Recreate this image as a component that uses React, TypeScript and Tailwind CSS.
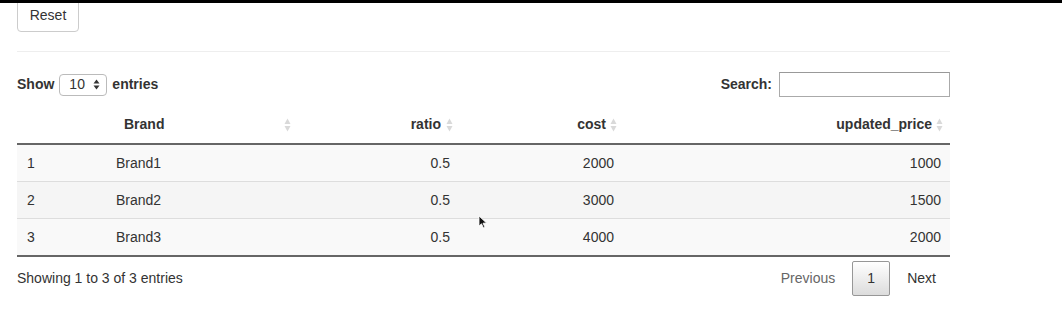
import React from "react";

type Row = { id: number; brand: string; ratio: string; cost: number; updated: number };

const rows: Row[] = [
  { id: 1, brand: "Brand1", ratio: "0.5", cost: 2000, updated: 1000 },
  { id: 2, brand: "Brand2", ratio: "0.5", cost: 3000, updated: 1500 },
  { id: 3, brand: "Brand3", ratio: "0.5", cost: 4000, updated: 2000 },
];

// DataTables-style double arrow sort marker
function SortIcon() {
  return (
    <svg width="7" height="14" viewBox="0 0 7 14" className="shrink-0">
      <path d="M3.5 0.5 L6.5 6 L0.5 6 Z" fill="#d9d9d9" />
      <path d="M3.5 13.5 L6.5 8 L0.5 8 Z" fill="#d9d9d9" />
    </svg>
  );
}

function SelectArrows() {
  return (
    <svg width="7" height="11" viewBox="0 0 7 11">
      <path d="M3.5 0.5 L6.5 4.5 L0.5 4.5 Z" fill="#333" />
      <path d="M3.5 10.5 L6.5 6.5 L0.5 6.5 Z" fill="#333" />
    </svg>
  );
}

function Cursor() {
  return (
    <svg width="10" height="14" viewBox="0 0 10 14">
      <path d="M1 1 L1 11 L3.5 8.8 L5.5 13 L7 12.3 L5 8.2 L8.5 8 Z" fill="#111" stroke="#fff" strokeWidth="0.8" />
    </svg>
  );
}

export default function App() {
  return (
    <div
      className="relative w-[1062px] h-[310px] overflow-hidden bg-white text-[14px] text-[#333]"
      style={{ fontFamily: '"Liberation Sans", Arial, sans-serif' }}
    >
      {/* top window edge */}
      <div className="absolute top-0 left-0 right-0 h-[3px] bg-black z-10" />

      <div className="pl-[17px] w-[950px]">
        <button className="-mt-[2px] h-[34px] w-[62px] border border-[#ccc] rounded-[4px] bg-white text-[14px] text-[#333]">
          Reset
        </button>

        <div className="mt-[19px] border-t border-[#eee]" />

        {/* length + search */}
        <div className="mt-[20px] h-[25px] flex items-center justify-between">
          <div className="flex items-center gap-[5px] font-bold">
            <span>Show</span>
            <div className="w-[48px] h-[22px] border border-[#bbb] rounded-[4px] flex items-center justify-between pl-[9px] pr-[6px] font-normal">
              <span>10</span>
              <SelectArrows />
            </div>
            <span>entries</span>
          </div>
          <div className="flex items-center gap-[7px] font-bold">
            <span>Search:</span>
            <div className="w-[171px] h-[25px] border border-[#aaa] border-t-[#999]" />
          </div>
        </div>

        {/* table */}
        <table className="mt-[9px] w-[933px] table-fixed border-separate border-spacing-0">
          <colgroup>
            <col className="w-[89px]" />
            <col className="w-[194px]" />
            <col className="w-[160px]" />
            <col className="w-[165px]" />
            <col className="w-[325px]" />
          </colgroup>
          <thead>
            <tr className="h-[39px]">
              <th className="border-b-2 border-[#666] px-[10px]" />
              <th className="border-b-2 border-[#666] pl-[18px] pr-[9px] text-left font-bold">
                <div className="flex items-center justify-between">
                  <span>Brand</span>
                  <SortIcon />
                </div>
              </th>
              <th className="border-b-2 border-[#666] pr-[7px] font-bold">
                <div className="flex items-center justify-end gap-[5px]">
                  <span>ratio</span>
                  <SortIcon />
                </div>
              </th>
              <th className="border-b-2 border-[#666] pr-[8px] font-bold">
                <div className="flex items-center justify-end gap-[4px]">
                  <span>cost</span>
                  <SortIcon />
                </div>
              </th>
              <th className="border-b-2 border-[#666] pr-[7px] font-bold">
                <div className="flex items-center justify-end gap-[4px]">
                  <span>updated_price</span>
                  <SortIcon />
                </div>
              </th>
            </tr>
          </thead>
          <tbody>
            {rows.map((r, i) => {
              const bg = i === 1 ? "bg-[#f5f5f5]" : "bg-[#f9f9f9]";
              const top = i === 0 ? "" : "border-t border-[#ddd]";
              const last = i === rows.length - 1;
              const bottom = last ? "border-b-2 border-b-[#666]" : "";
              const height = i === 0 ? "h-[36px]" : last ? "h-[39px]" : "h-[37px]";
              const cell = `${bg} ${top} ${bottom} px-[10px]`;
              return (
                <tr key={r.id} className={height}>
                  <td className={cell}>{r.id}</td>
                  <td className={cell}>{r.brand}</td>
                  <td className={`${cell} text-right`}>{r.ratio}</td>
                  <td className={`${cell} text-right !pr-[11px]`}>{r.cost}</td>
                  <td className={`${cell} text-right !pr-[9px]`}>{r.updated}</td>
                </tr>
              );
            })}
          </tbody>
        </table>

        {/* info + pagination */}
        <div className="mt-[4px] flex items-center justify-between">
          <span>Showing 1 to 3 of 3 entries</span>
          <div className="flex items-center pr-[14px]">
            <span className="text-[#666] mr-[17px]">Previous</span>
            <span className="w-[38px] h-[35px] flex items-center justify-center border border-[#979797] rounded-[2px] bg-gradient-to-b from-white to-[#dcdcdc] text-[#333]">
              1
            </span>
            <span className="ml-[17px]">Next</span>
          </div>
        </div>
      </div>

      <div className="absolute left-[478px] top-[215px]">
        <Cursor />
      </div>
    </div>
  );
}
